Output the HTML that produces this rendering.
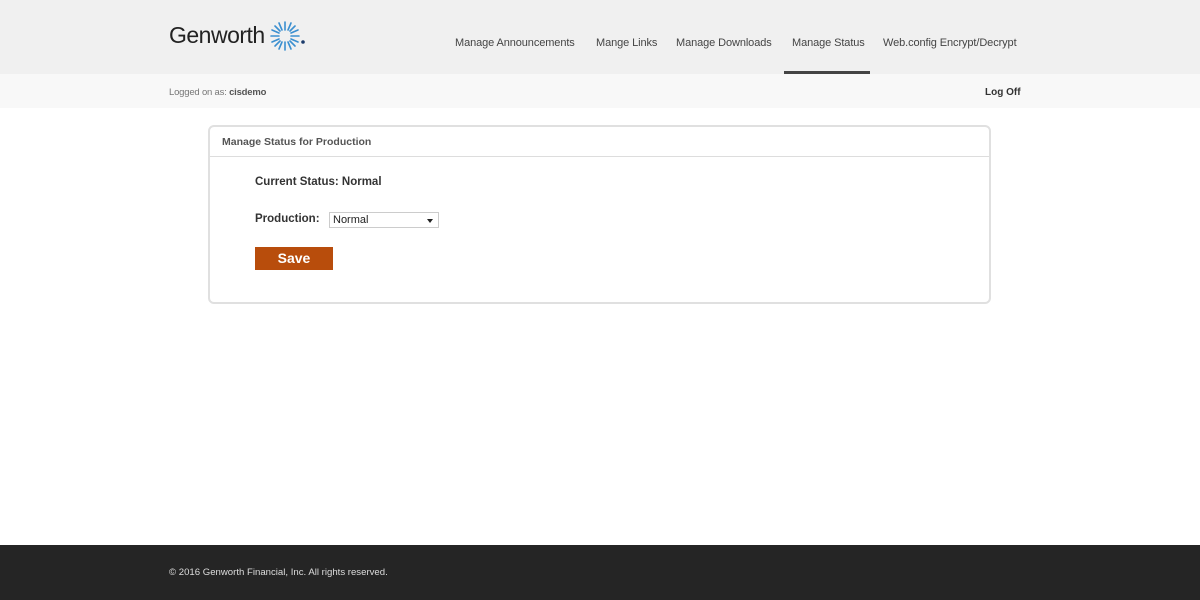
<!DOCTYPE html>
<html><head><style>
*{margin:0;padding:0;box-sizing:border-box}
body{width:1200px;height:600px;background:#fff;font-family:"Liberation Sans",sans-serif;position:relative;overflow:hidden}
.hdr{position:absolute;left:0;top:0;width:1200px;height:74px;background:#f0f0f0}
.logo{position:absolute;left:169px;top:22px;font-size:23px;color:#222;letter-spacing:-0.5px}
.nav a{position:absolute;top:37px;font-size:11px;color:#444;text-decoration:none;letter-spacing:-0.1px}
.active{position:absolute;left:784px;top:71px;width:86px;height:3px;background:#444}
.sub{position:absolute;left:0;top:74px;width:1200px;height:34px;background:#f8f8f8}
.sub .l{position:absolute;left:169px;top:13px;font-size:9.5px;color:#777;letter-spacing:-0.2px}
.sub .r{position:absolute;left:985px;top:13px;font-size:10px;color:#333;font-weight:bold}
.box{position:absolute;left:208px;top:125px;width:783px;height:179px;border:2px solid #e0e0e0;border-radius:6px}
.box .t{height:30px;border-bottom:1px solid #ddd;font-size:10.5px;color:#555;font-weight:bold;padding:9px 12px}
.cs{position:absolute;left:45px;top:49px;font-size:11.5px;font-weight:bold;color:#333}
.pl{position:absolute;left:45px;top:86px;font-size:11.5px;font-weight:bold;color:#333}
.sel{position:absolute;left:119px;top:85px;width:110px;height:16px;border:1px solid #ccc;font-size:11px;padding:1px 3px;color:#222}
.sel:after{content:"";position:absolute;right:5px;top:6px;border:3px solid transparent;border-top:4px solid #222}
.btn{position:absolute;left:45px;top:120px;width:78px;height:23px;background:#b84d0c;color:#fff;font-weight:bold;font-size:14px;text-align:center;line-height:23px}
.ftr{position:absolute;left:0;top:545px;width:1200px;height:55px;background:#252525}
.ftr span{position:absolute;left:169px;top:22px;font-size:9.6px;color:#ddd}
</style></head><body>
<div class="hdr">
<div class="logo">Genworth</div>
<svg style="position:absolute;left:268px;top:21px" width="40" height="30" viewBox="0 0 40 30">
<g stroke="#3a8fd0" stroke-width="1.6" stroke-linecap="round">
<line x1="17" y1="1" x2="17" y2="9"/><line x1="17" y1="21" x2="17" y2="29"/>
<line x1="3" y1="15" x2="11" y2="15"/><line x1="23" y1="15" x2="31" y2="15"/>
<line x1="7" y1="5" x2="12" y2="10"/><line x1="22" y1="20" x2="27" y2="25"/>
<line x1="27" y1="5" x2="22" y2="10"/><line x1="12" y1="20" x2="7" y2="25"/>
<line x1="11" y1="2" x2="14" y2="9"/><line x1="20" y1="21" x2="23" y2="28"/>
<line x1="23" y1="2" x2="20" y2="9"/><line x1="14" y1="21" x2="11" y2="28"/>
<line x1="4" y1="9" x2="11" y2="12"/><line x1="23" y1="18" x2="30" y2="21"/>
<line x1="30" y1="9" x2="23" y2="12"/><line x1="11" y1="18" x2="4" y2="21"/>
</g><circle cx="35" cy="21" r="1.8" fill="#1a3a6a"/></svg>
<div class="nav">
<a style="left:455px">Manage Announcements</a>
<a style="left:596px">Mange Links</a>
<a style="left:676px">Manage Downloads</a>
<a style="left:792px">Manage Status</a>
<a style="left:883px">Web.config Encrypt/Decrypt</a>
</div>
<div class="active"></div>
</div>
<div class="sub"><span class="l">Logged on as: <b style="color:#555">cisdemo</b></span><span class="r">Log Off</span></div>
<div class="box"><div class="t">Manage Status for Production</div>
<div class="cs">Current Status: Normal</div>
<div class="pl">Production:</div>
<div class="sel">Normal</div>
<div class="btn">Save</div>
</div>
<div class="ftr"><span>© 2016 Genworth Financial, Inc. All rights reserved.</span></div>
</body></html>
